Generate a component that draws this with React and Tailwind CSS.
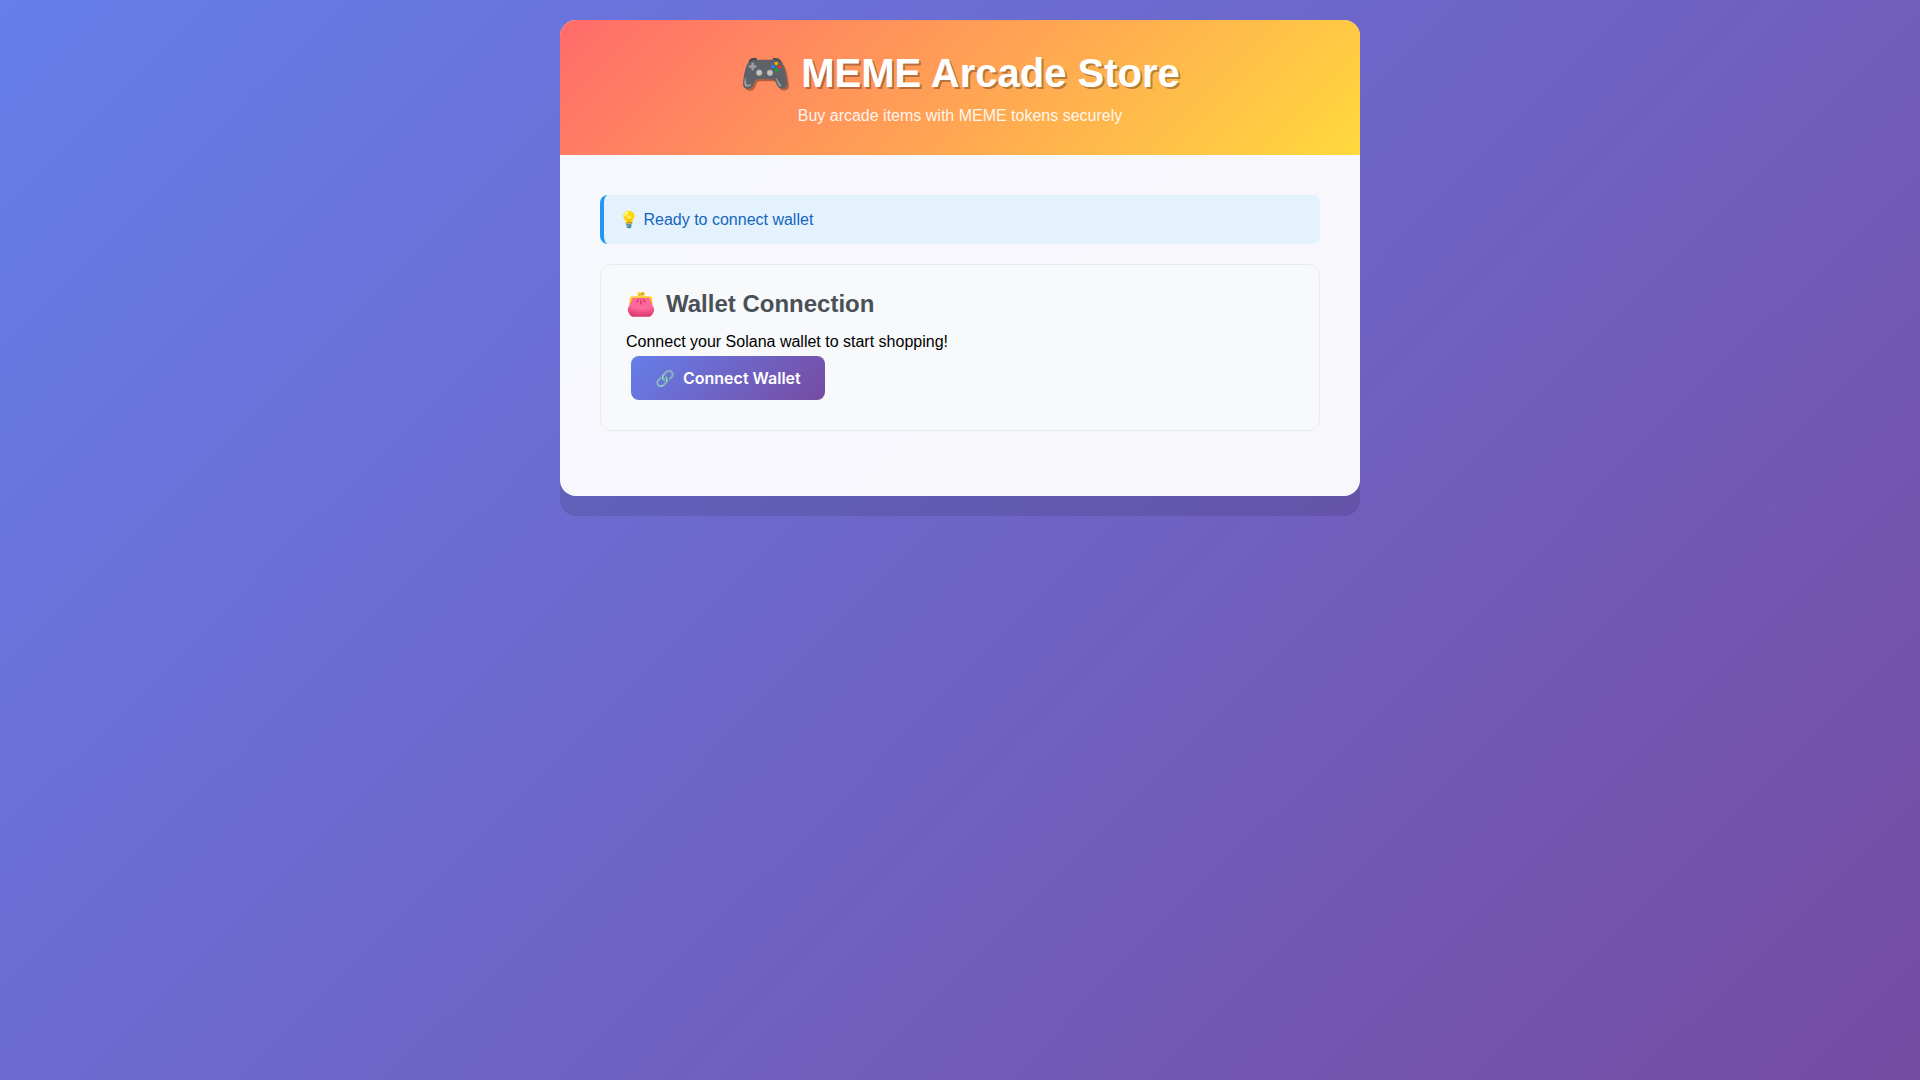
export default function App() {
  return (
    <div className="min-h-screen bg-[linear-gradient(135deg,#667eea_0%,#764ba2_100%)] p-5 font-[Arial,'Liberation_Sans',sans-serif] text-base text-black">
      <main className="mx-auto max-w-[800px] overflow-hidden rounded-2xl bg-white/95 shadow-[0_20px_0_rgba(0,0,0,0.1)]">
        <header className="bg-[linear-gradient(135deg,#ff6b6b_0%,#ffd93d_100%)] p-[30px] text-center text-white">
          <h1 className="mb-2.5 text-[40px] leading-[46px] font-bold [text-shadow:2px_2px_0_rgba(0,0,0,0.3)]">🎮 MEME Arcade Store</h1>
          <p className="leading-[19px] opacity-90">Buy arcade items with MEME tokens securely</p>
        </header>
        <div className="p-10">
          <div role="status" className="mb-5 rounded-lg border-l-4 border-[#2196f3] bg-[#e3f2fd] p-[15px] leading-[19px] text-[#1565c0]">
            💡 Ready to connect wallet
          </div>
          <section className="mb-[25px] rounded-xl border border-[#e9ecef] bg-[#f8f9fa] p-[25px]">
            <h2 className="mb-[15px] flex items-center gap-2.5 text-2xl leading-[27px] font-bold text-[#495057]">
              <span>👛</span> Wallet Connection
            </h2>
            <p className="leading-[19px]">Connect your Solana wallet to start shopping!</p>
            <button type="button" className="m-[5px] inline-flex items-center gap-2 rounded-lg bg-[linear-gradient(135deg,#667eea_0%,#764ba2_100%)] px-6 py-3 font-[Inter,sans-serif] leading-5 font-semibold text-white">
              <span>🔗</span> Connect Wallet
            </button>
          </section>
        </div>
      </main>
    </div>
  );
}
